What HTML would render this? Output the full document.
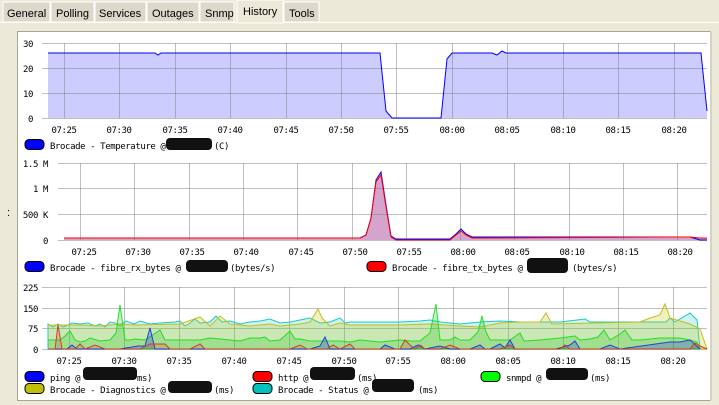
<!DOCTYPE html>
<html><head><meta charset="utf-8"><style>
html,body{margin:0;padding:0;width:719px;height:405px;overflow:hidden;background:#ece9d8;font-family:"Liberation Sans",sans-serif}
svg{position:absolute;left:0;top:0}
</style></head><body>
<svg width="719" height="405" viewBox="0 0 719 405" font-family="DejaVu Sans Mono, Liberation Mono, monospace" font-size="9" letter-spacing="-0.4">
<rect x="0" y="22" width="719" height="1" fill="#fff"/>
<g font-family="Liberation Sans, sans-serif" font-size="11" fill="#000" letter-spacing="0">
<rect x="3" y="2" width="47" height="20" fill="#dcd9cb" stroke="#fff" stroke-width="1"/><text x="7" y="17">General</text>
<rect x="51" y="2" width="43" height="20" fill="#dcd9cb" stroke="#fff"/><text x="56" y="17">Polling</text>
<rect x="95" y="2" width="51" height="20" fill="#dcd9cb" stroke="#fff"/><text x="99" y="17">Services</text>
<rect x="147" y="2" width="52" height="20" fill="#dcd9cb" stroke="#fff"/><text x="152" y="17">Outages</text>
<rect x="200" y="2" width="34" height="20" fill="#dcd9cb" stroke="#fff"/><text x="205" y="17">Snmp</text>
<rect x="237" y="0" width="46" height="23" fill="#ece9d8" stroke="#fff"/><text x="243" y="15">History</text>
<rect x="284" y="2" width="35" height="20" fill="#dcd9cb" stroke="#fff"/><text x="289" y="17">Tools</text>
</g>
<text x="7" y="216" font-family="Liberation Sans" font-size="11">:</text>
<rect x="17.5" y="31.5" width="693" height="369" fill="#fff" stroke="#a8a596"/>
<rect x="710" y="31" width="2" height="370" fill="#d6d3c4"/>

<polygon fill="#ccccff" points="48,53 155,53 158,55 161,53 380,53 386,111 392,118 441,118 447,59 452,53 492,53 497,55 502,51 506,53 701,53 707,111 707,118 48,118"/>
<g stroke="#808080" stroke-opacity="0.5">
<line x1="42" y1="43.5" x2="707" y2="43.5"/><line x1="42" y1="68.5" x2="707" y2="68.5"/><line x1="42" y1="93.5" x2="707" y2="93.5"/><line x1="42" y1="118.5" x2="707" y2="118.5"/>
<line x1="64.5" y1="43" x2="64.5" y2="118"/><line x1="119.5" y1="43" x2="119.5" y2="118"/><line x1="175.5" y1="43" x2="175.5" y2="118"/><line x1="230.5" y1="43" x2="230.5" y2="118"/><line x1="286.5" y1="43" x2="286.5" y2="118"/><line x1="341.5" y1="43" x2="341.5" y2="118"/><line x1="396.5" y1="43" x2="396.5" y2="118"/><line x1="452.5" y1="43" x2="452.5" y2="118"/><line x1="507.5" y1="43" x2="507.5" y2="118"/><line x1="563.5" y1="43" x2="563.5" y2="118"/><line x1="618.5" y1="43" x2="618.5" y2="118"/><line x1="674.5" y1="43" x2="674.5" y2="118"/>
</g>
<polyline fill="none" stroke="#0000ff" points="48,53 155,53 158,55 161,53 380,53 386,111 392,118 441,118 447,59 452,53 492,53 497,55 502,51 506,53 701,53 707,111"/>
<g text-anchor="end"><text x="33" y="47">30</text><text x="33" y="72">20</text><text x="33" y="97">10</text><text x="33" y="122">0</text></g>
<g text-anchor="middle"><text x="64" y="133">07:25</text><text x="119" y="133">07:30</text><text x="175" y="133">07:35</text><text x="230" y="133">07:40</text><text x="286" y="133">07:45</text><text x="341" y="133">07:50</text><text x="396" y="133">07:55</text><text x="452" y="133">08:00</text><text x="507" y="133">08:05</text><text x="563" y="133">08:10</text><text x="618" y="133">08:15</text><text x="674" y="133">08:20</text></g>
<rect x="25" y="139.5" width="19" height="10" rx="4" fill="#0000ff" stroke="#000"/>
<text x="50" y="149">Brocade - Temperature @</text><rect x="166" y="138" width="46" height="12" rx="4" fill="#111"/><text x="214" y="149">(C)</text>

<polygon fill="#d4a4cc" points="64,238 360,238 366,235 371,218 376,180 381,173 386,205 391,236 396,239 450,239 456,234 461,230 466,234 472,237 707,238 707,240 64,240"/>
<g stroke="#808080" stroke-opacity="0.5">
<line x1="58" y1="163.5" x2="707" y2="163.5"/><line x1="58" y1="188.5" x2="707" y2="188.5"/><line x1="58" y1="214.5" x2="707" y2="214.5"/><line x1="58" y1="240.5" x2="707" y2="240.5"/>
<line x1="80.5" y1="163" x2="80.5" y2="240"/><line x1="134.5" y1="163" x2="134.5" y2="240"/><line x1="189.5" y1="163" x2="189.5" y2="240"/><line x1="243.5" y1="163" x2="243.5" y2="240"/><line x1="297.5" y1="163" x2="297.5" y2="240"/><line x1="352.5" y1="163" x2="352.5" y2="240"/><line x1="406.5" y1="163" x2="406.5" y2="240"/><line x1="460.5" y1="163" x2="460.5" y2="240"/><line x1="514.5" y1="163" x2="514.5" y2="240"/><line x1="569.5" y1="163" x2="569.5" y2="240"/><line x1="623.5" y1="163" x2="623.5" y2="240"/><line x1="677.5" y1="163" x2="677.5" y2="240"/>
</g>
<polyline fill="none" stroke="#0000ff" points="64,238 360,238 366,235 371,218 376,180 381,172 386,205 391,236 396,239 450,239 456,234 461,229 466,234 472,237 690,237 700,240 707,240"/>
<polyline fill="none" stroke="#ff0000" points="64,238 360,238 366,235 371,218 376,182 381,175 386,207 391,237 396,240 450,240 456,235 461,231 466,235 472,238 690,237 700,238 707,238"/>
<g text-anchor="end"><text x="48" y="167">1.5 M</text><text x="48" y="192">1 M</text><text x="48" y="218">500 K</text><text x="48" y="244">0</text></g>
<g text-anchor="middle"><text x="84" y="255">07:25</text><text x="138" y="255">07:30</text><text x="192" y="255">07:35</text><text x="246" y="255">07:40</text><text x="301" y="255">07:45</text><text x="355" y="255">07:50</text><text x="409" y="255">07:55</text><text x="463" y="255">08:00</text><text x="517" y="255">08:05</text><text x="572" y="255">08:10</text><text x="626" y="255">08:15</text><text x="680" y="255">08:20</text></g>
<rect x="25" y="261.5" width="19" height="10" rx="4" fill="#0000ff" stroke="#000"/>
<text x="50" y="271">Brocade - fibre_rx_bytes @</text><rect x="186" y="260" width="42" height="12" rx="4" fill="#111"/><text x="230" y="271">(bytes/s)</text>
<rect x="367" y="261.5" width="19" height="10" rx="4" fill="#ff0000" stroke="#000"/>
<text x="392" y="271">Brocade - fibre_tx_bytes @</text><rect x="527" y="258" width="41" height="15" rx="4" fill="#111"/><text x="572" y="271">(bytes/s)</text>

<g stroke="#808080" stroke-opacity="0.5">
<line x1="42" y1="287.5" x2="707" y2="287.5"/><line x1="42" y1="308.5" x2="707" y2="308.5"/><line x1="42" y1="328.5" x2="707" y2="328.5"/><line x1="42" y1="349.5" x2="707" y2="349.5"/>
<line x1="69.5" y1="287" x2="69.5" y2="349"/><line x1="124.5" y1="287" x2="124.5" y2="349"/><line x1="179.5" y1="287" x2="179.5" y2="349"/><line x1="234.5" y1="287" x2="234.5" y2="349"/><line x1="289.5" y1="287" x2="289.5" y2="349"/><line x1="344.5" y1="287" x2="344.5" y2="349"/><line x1="398.5" y1="287" x2="398.5" y2="349"/><line x1="453.5" y1="287" x2="453.5" y2="349"/><line x1="508.5" y1="287" x2="508.5" y2="349"/><line x1="563.5" y1="287" x2="563.5" y2="349"/><line x1="618.5" y1="287" x2="618.5" y2="349"/><line x1="673.5" y1="287" x2="673.5" y2="349"/>
</g>
<polygon fill="#00c0c0" fill-opacity="0.2" stroke="#20c8c8" points="48,324 53,327 58,324 63,327 68,325 72,323 80,324 88,323 95,326 100,324 105,327 110,322 115,323 120,326 126,321 134,324 140,321 150,324 160,323 175,322 180,321 185,326 190,323 195,319 200,323 210,322 216,316 222,322 230,321 240,324 250,322 260,321 270,319 280,323 290,322 300,320 310,318 320,323 330,322 340,318 345,323 350,322 400,322 420,321 430,320 440,322 460,324 480,322 500,321 520,322 560,322 585,319 590,322 640,322 666,322 670,318 675,322 690,313 697,320 700,349 48,349"/>
<polyline fill="#c8c800" fill-opacity="0.25" stroke="#c0c020" points="48,325 80,325 100,326 120,324 135,325 180,324 200,317 210,326 220,316 230,324 250,326 260,325 270,324 280,326 300,324 310,322 318,309 322,318 330,326 340,323 350,325 400,325 430,324 445,325 460,326 480,327 500,323 520,322 540,322 546,313 552,324 640,322 645,320 650,318 660,315 665,304 670,318 690,324 700,329 707,349 48,349"/>
<polyline fill="#00c000" fill-opacity="0.2" stroke="#20e020" points="48,340 60,340 65,336 70,331 75,340 80,342 85,341 90,338 100,341 110,340 116,333 120,305 125,340 130,340 135,339 145,340 160,330 165,340 200,340 210,338 230,340 240,341 250,338 260,338 265,337 270,341 280,340 290,331 295,339 300,339 310,341 320,341 330,341 340,341 350,342 360,340 370,341 380,342 390,341 400,340 410,341 420,341 430,333 436,304 440,340 450,340 455,337 460,340 470,340 478,332 482,316 486,332 490,340 500,340 510,340 520,333 524,341 540,340 560,338 575,336 580,340 590,339 598,337 604,330 610,340 620,334 625,330 632,340 640,340 660,338 670,338 680,338 690,340 697,342 700,349 48,349"/>
<polyline fill="#0000ff" fill-opacity="0.2" stroke="#2040e0" points="48,349 67,349 72,345 77,349 120,349 138,346 145,346 150,328 155,349 190,349 222,349 310,349 320,346 325,337 330,349 360,349 380,349 385,345 395,349 410,349 418,345 425,349 440,346 450,349 470,349 480,345 485,349 490,349 500,344 505,348 510,340 515,349 540,349 556,349 570,345 575,341 580,349 600,349 610,345 620,349 670,342 680,342 690,340 700,349"/>
<polyline fill="#ff0000" fill-opacity="0.15" stroke="#d04020" points="48,349 55,349 58,325 62,349 75,349 80,344 85,349 95,345 105,349 140,349 150,344 165,344 170,349 190,349 200,344 205,349 290,349 300,345 307,349 327,349 333,345 340,349 350,344 355,349 385,349 400,349 405,340 410,345 415,349 420,345 425,349 440,349 450,345 460,349 500,349 510,345 515,349 560,349 565,345 570,349 660,349 670,349 690,349 695,343 700,346 707,349"/>
<g text-anchor="end"><text x="38" y="291">225</text><text x="38" y="312">150</text><text x="38" y="332">75</text><text x="38" y="353">0</text></g>
<g text-anchor="middle"><text x="69" y="364">07:25</text><text x="124" y="364">07:30</text><text x="179" y="364">07:35</text><text x="234" y="364">07:40</text><text x="289" y="364">07:45</text><text x="344" y="364">07:50</text><text x="398" y="364">07:55</text><text x="453" y="364">08:00</text><text x="508" y="364">08:05</text><text x="563" y="364">08:10</text><text x="618" y="364">08:15</text><text x="673" y="364">08:20</text></g>
<rect x="25" y="371.5" width="19" height="10" rx="4" fill="#0000ff" stroke="#000"/>
<text x="50" y="381">ping @</text><rect x="83" y="367" width="54" height="13" rx="4" fill="#111"/><text x="137" y="381">ms)</text>
<rect x="253" y="371.5" width="19" height="10" rx="4" fill="#ff0000" stroke="#000"/>
<text x="278" y="381">http @</text><rect x="310" y="367" width="45" height="13" rx="4" fill="#111"/><text x="357" y="381">(ms)</text>
<rect x="481" y="371.5" width="19" height="10" rx="4" fill="#00ff00" stroke="#000"/>
<text x="506" y="381">snmpd @</text><rect x="546" y="368" width="42" height="12" rx="4" fill="#111"/><text x="590" y="381">(ms)</text>
<rect x="25" y="383.5" width="19" height="10" rx="4" fill="#c0c000" stroke="#000"/>
<text x="50" y="393">Brocade - Diagnostics @</text><rect x="168" y="381" width="44" height="12" rx="4" fill="#111"/><text x="214" y="393">(ms)</text>
<rect x="253" y="383.5" width="19" height="10" rx="4" fill="#00c0c0" stroke="#000"/>
<text x="278" y="393">Brocade - Status @</text><rect x="372" y="379" width="42" height="13" rx="4" fill="#111"/><text x="418" y="393">(ms)</text>
</svg>
</body></html>
